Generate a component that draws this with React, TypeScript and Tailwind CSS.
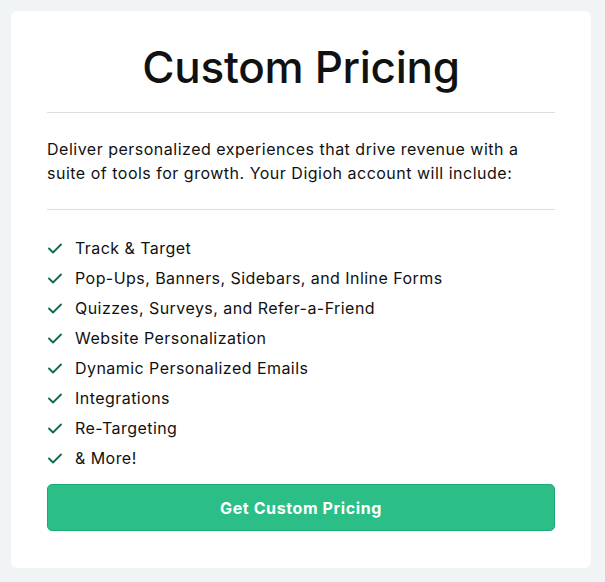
import React from "react";

const items = [
  "Track & Target",
  "Pop-Ups, Banners, Sidebars, and Inline Forms",
  "Quizzes, Surveys, and Refer-a-Friend",
  "Website Personalization",
  "Dynamic Personalized Emails",
  "Integrations",
  "Re-Targeting",
  "& More!",
];

function Check() {
  return (
    <svg width="14" height="11" viewBox="0 0 14 11" fill="none" className="shrink-0">
      <path d="M1 5.5 L5 9.5 L13 1.5" stroke="#0f6b4c" strokeWidth="1.8" strokeLinecap="round" strokeLinejoin="round" />
    </svg>
  );
}

export default function App() {
  return (
    <div className="min-h-[582px] w-[605px] bg-[#f1f4f5] pl-[11px] pr-[14px] pt-[11px] pb-[14px]" style={{ fontFamily: "Inter, 'Open Sans', sans-serif" }}>
      <div className="bg-white rounded-[6px] pl-[36px] pr-[36px] pt-[30px] pb-[37px] text-[#111111]">
        <h1 className="text-center text-[44px] leading-[53px] font-medium tracking-[-0.3px]">Custom Pricing</h1>
        <div className="mt-[18px] h-px bg-[#dedede]" />
        <p className="mt-[24px] text-[16px] leading-[24px] tracking-[0.5px]">
          Deliver personalized experiences that drive revenue with a suite of tools for growth. Your Digioh account will include:
        </p>
        <div className="mt-[24px] h-px bg-[#dedede]" />
        <ul className="mt-[23px]">
          {items.map((t) => (
            <li key={t} className="flex items-center h-[30px] text-[16px] tracking-[0.45px]">
              <span className="w-[28px] pl-[1px] flex items-center"><Check /></span>
              <span>{t}</span>
            </li>
          ))}
        </ul>
        <button className="mt-[11px] w-full h-[47px] rounded-[5px] bg-[#2bbf87] border border-[#1ca874] text-white font-bold text-[16px] tracking-[0.6px]">
          Get Custom Pricing
        </button>
      </div>
    </div>
  );
}
